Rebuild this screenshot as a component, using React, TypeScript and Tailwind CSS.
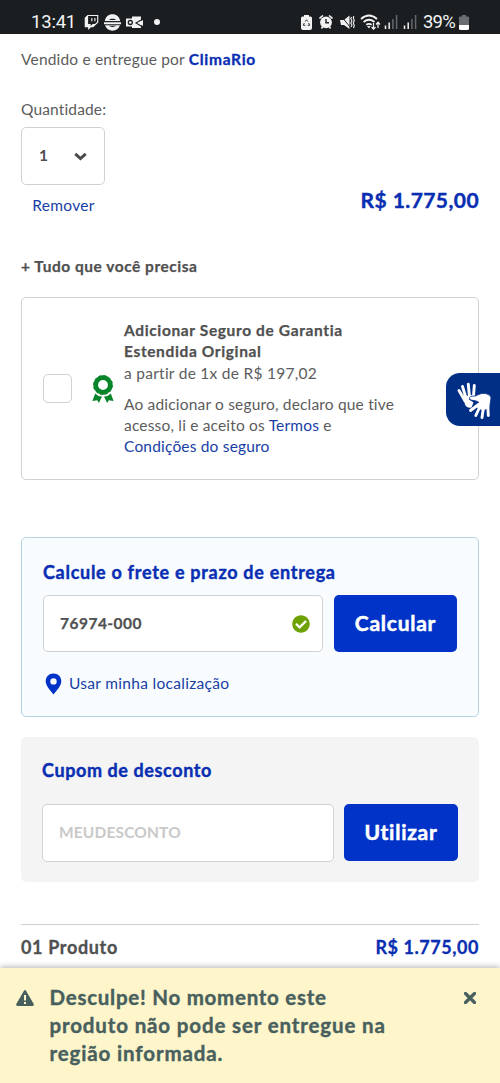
import type { ReactNode } from "react";
import { FaCheckCircle, FaTwitch } from "react-icons/fa";

const Signal = () => (
  <svg className="h-[14px] w-[14px]" viewBox="0 0 14 14">
    <path d="M1.5 10.5V14M5.2 7.5V14" stroke="#f2f2f2" strokeWidth="1.5" />
    <path d="M8.9 4V14M12.6 0V14" stroke="#65696c" strokeWidth="1.5" />
  </svg>
);

const StatusBar = () => (
  <header className="relative h-[34px] shrink-0 bg-[#1a1e21] text-[#f2f2f2]">
    <div className="flex h-full items-center pt-[10px] pl-[31px] font-[Roboto,sans-serif] text-[18.5px] leading-none">
      <span className="w-[53px] tracking-[-0.2px]">13:41</span>
      <FaTwitch className="size-[15px]" />
      <svg className="ml-[5px] size-[17px]" viewBox="0 0 17 17">
        <path
          d="M.8 7C1.500 2.800 4.500 .2 8.500 .2S15.500 2.800 16.200 7ZM0 8.200h17v2H0ZM1 11.200h15c-1.200 3.400-3.800 5.500-7.500 5.500S2.200 14.600 1 11.200Z"
          fill="currentColor"
        />
        <path d="M5 6C6 4.200 11 4.200 12 6ZM5 11.800H12C11 13.300 6 13.300 5 11.800Z" fill="#1a1e21" />
      </svg>
      <svg className="ml-[5px] h-[13px] w-[17px]" viewBox="0 0 17 13">
        <path d="M6 .5H15V12H6Z" fill="#f2f2f2" />
        <path d="M0 2.500H8.500V10.500H0Z" fill="#f2f2f2" />
        <circle cx="4.300" cy="6.500" r="2" fill="none" stroke="#1a1e21" strokeWidth="1.300" />
        <path d="M16 3.500L10 7L16 10.500" fill="none" stroke="#1a1e21" strokeWidth="1.100" />
        <path d="M17 4L12 7L17 10Z" fill="#f2f2f2" />
      </svg>
      <span className="ml-[11px] size-[6px] rounded-full bg-[#f2f2f2]" />
      <div className="ml-auto flex items-center pr-[31px]">
        <svg className="h-[15px] w-[11px]" viewBox="0 0 11 15">
          <path d="M3 0H8V1.500H9.500Q11 1.500 11 3V13Q11 15 9 15H2Q0 15 0 13V3Q0 1.500 1.500 1.500H3Z" fill="currentColor" />
          <path d="M4.200 6.500L5.500 4.800L6.800 6.500M7.600 8L8.700 10.300H6.700M4.300 10.300H2.300L3.300 8" fill="none" stroke="#1a1e21" strokeWidth=".9" />
        </svg>
        <svg className="ml-[7px] size-[14px]" viewBox="0 0 14 14">
          <path d="M.5 3.500L4 .5M13.500 3.500L10 .5M2.500 13.500L4 11M11.500 13.500L10 11" stroke="currentColor" strokeWidth="1.600" />
          <circle cx="7" cy="7.300" r="5.900" fill="currentColor" />
          <path d="M7 4V7.800H10" fill="none" stroke="#1a1e21" strokeWidth="1.400" />
        </svg>
        <svg className="ml-[7px] size-[15px]" viewBox="0 0 15 15">
          <path d="M0 5H4L9.500 .5V14L4 10H1Z" fill="currentColor" />
          <path d="M1 1L11 13" stroke="#1a1e21" strokeWidth="1" />
          <path d="M11.500 2L10.800 4L12 6L10.800 8L12 10L11 12M13.800 1L13.300 3L14.300 5.500L13.300 8L14.300 10.500L13.500 13" fill="none" stroke="currentColor" strokeWidth="1.100" />
        </svg>
        <svg className="ml-[5px] h-[16px] w-[21px]" viewBox="0 0 21 16">
          <path d="M1 5Q9-2 17 5M3.600 8Q9 3.500 14.500 8M6.300 10.800Q9 8.800 11.700 10.800" fill="none" stroke="currentColor" strokeWidth="1.700" />
          <path d="M7 12L9 14.500L10.500 12Z" fill="currentColor" />
          <path d="M13.500 9V15M11.500 13L13.500 15.200L15.500 13M18 14V8.500M16 10.500L18 8.200L20 10.500" fill="none" stroke="currentColor" strokeWidth="1.200" />
        </svg>
        <span className="ml-[3px]">
          <Signal />
        </span>
        <span className="ml-[5px]">
          <Signal />
        </span>
        <span className="ml-[6px] w-[34px] tracking-[-0.8px] whitespace-nowrap">39%</span>
        <svg className="ml-[2px] h-[15px] w-[10px]" viewBox="0 0 10 15">
          <path d="M3 0H7V1.500H9Q10 1.500 10 2.500V10H0V2.500Q0 1.500 1 1.500H3Z" fill="#6b6e70" />
          <path d="M0 10H10V13.500Q10 15 8.500 15H1.500Q0 15 0 13.500Z" fill="#fff" />
        </svg>
      </div>
    </div>
  </header>
);

const WarrantyBadge = () => (
  <svg className="h-[28px] w-[22px]" viewBox="0 0 22 28">
    <circle cx="11" cy="10" r="7.300" fill="none" stroke="#078429" strokeWidth="4.700" />
    <circle cx="11" cy="10" r="9.500" fill="none" stroke="#078429" strokeWidth="1" strokeDasharray="3 1.970" />
    <path d="M3.200 18.500Q6.200 21.800 10 21.500L6.900 28L5.200 25.300L.4 26ZM18.800 18.500Q15.800 21.800 12 21.500L15.100 28L16.800 25.300L21.600 26Z" fill="#078429" />
  </svg>
);

const LibrasButton = () => (
  <button
    type="button"
    className="absolute top-[373px] right-0 h-[53px] w-[54px] rounded-l-[14px] bg-[#012f86]"
  >
    <svg className="absolute top-[9px] left-[11px] h-[38px] w-[36px]" viewBox="0 0 36 38">
      <path d="M6.500 16L11 13.500L18.500 12.500L13 15.500L12 17.500L16.500 20.500L14.500 25.500Q10 26.500 8 22.500Z" fill="#fff" />
      <path
        d="M8 19L2 8.500M9 16L5.500 4.500M12.500 15L11.300 2.300M16.500 14L17.300 3.500"
        fill="none"
        stroke="#fff"
        strokeWidth="2.900"
        strokeLinecap="round"
      />
      <path
        d="M15 14.200Q19 14.500 21 12.800Q25 10.500 29 11.600Q34 13 34 16L32.500 26L26 29L19.500 26L21.500 20L18.500 18.800L13.500 18Q11 14.500 15 14.200Z"
        fill="#fff"
        stroke="#012f86"
        strokeWidth=".8"
      />
      <path
        d="M21.500 22.500L13.500 28.500M23 24.500L18.800 33.500M26.500 25L25 35.500M30.800 23L31.300 33.500"
        fill="none"
        stroke="#fff"
        strokeWidth="2.900"
        strokeLinecap="round"
      />
    </svg>
  </button>
);

interface ActionButtonProps {
  children: ReactNode;
  className: string;
}

const ActionButton = ({ children, className }: ActionButtonProps) => (
  <button
    type="button"
    className={`h-[57px] shrink-0 rounded-[5px] bg-[#0133c8] pb-[2px] text-[21px] font-bold tracking-[0.73px] text-white [-webkit-text-stroke:0.5px] ${className}`}
  >
    {children}
  </button>
);

const Insurance = () => (
  <section className="mt-[20px] flex h-[183px] rounded-[5px] border border-[#d1d1d1] pt-[21px] pl-[21px]">
    <span className="mt-[55px] size-[29px] shrink-0 rounded-[5px] border border-[#d1d1d1]" />
    <div className="mt-[56px] ml-[20px] shrink-0">
      <WarrantyBadge />
    </div>
    <div className="mt-px ml-[10px] leading-[21.300px] whitespace-nowrap">
      <p className="font-bold tracking-[0.630px] text-[#505050] [-webkit-text-stroke:0.25px]">
        Adicionar Seguro de Garantia
        <br />
        Estendida Original
      </p>
      <p className="tracking-[0.270px]">a partir de 1x de R$ 197,02</p>
      <p className="mt-[10px] tracking-[0.180px]">
        Ao adicionar o seguro, declaro que tive
        <br />
        acesso, li e aceito os <a className="text-[#173ea5]">Termos</a> e
        <br />
        <a className="text-[#173ea5]">Condições do seguro</a>
      </p>
    </div>
  </section>
);

const Shipping = () => (
  <section className="mt-[57px] h-[180px] rounded-[5px] border border-[#b5d5e3] bg-[#f8fcff] px-[21px] pt-[22px]">
    <h2 className="h-[25px] text-[18px] leading-[25px] font-bold tracking-[0.710px] text-[#092eb2] [-webkit-text-stroke:0.4px]">
      Calcule o frete e prazo de entrega
    </h2>
    <div className="mt-[10px] flex gap-[11px]">
      <div className="flex h-[57px] w-[280px] items-center justify-between rounded-[5px] border border-[#d1d1d1] bg-white pr-[12px] pl-[16px]">
        <span className="font-bold tracking-[0.480px] text-[#505050] [-webkit-text-stroke:0.25px]">76974-000</span>
        <FaCheckCircle className="size-[18px] text-[#6ea204]" />
      </div>
      <ActionButton className="w-[123px]">Calcular</ActionButton>
    </div>
    <div className="mt-[20px] flex h-[23px] items-center">
      <svg className="ml-[2px] h-[22px] w-[17px]" viewBox="0 0 17 22">
        <path
          d="M8.500 .5C4 .5 .7 3.900 .7 8.200C.7 13 5.500 17.500 8.500 21.500C11.500 17.500 16.300 13 16.300 8.200C16.300 3.900 13 .5 8.500 .5ZM8.500 5.200A3.200 3.200 0 1 1 8.500 11.600A3.200 3.200 0 0 1 8.500 5.200Z"
          fill="#0133c8"
        />
      </svg>
      <a className="ml-[7px] tracking-[0.300px] text-[#173ea5]">Usar minha localização</a>
    </div>
  </section>
);

const Coupon = () => (
  <section className="mt-[20px] h-[145px] rounded-[5px] bg-[#f4f4f4] px-[21px] pt-[21px]">
    <h2 className="h-[24px] text-[18px] leading-[24px] font-bold tracking-[0.600px] text-[#092eb2] [-webkit-text-stroke:0.4px]">
      Cupom de desconto
    </h2>
    <div className="mt-[22px] flex gap-[10px]">
      <div className="flex h-[58px] w-[292px] items-center rounded-[5px] border border-[#d1d1d1] bg-white pl-[16px] font-bold tracking-[0.150px] text-[#c9c9c9]">
        MEUDESCONTO
      </div>
      <ActionButton className="w-[114px]">Utilizar</ActionButton>
    </div>
  </section>
);

const Alert = () => (
  <aside className="absolute inset-x-0 bottom-0 flex h-[115px] bg-[#fef5ca] text-[#48605d] shadow-[0_-1px_6px_rgba(0,0,0,0.3)]">
    <svg className="mt-[21px] ml-[16px] h-[18px] w-[18px] shrink-0" viewBox="0 0 18 18">
      <path d="M9 1Q9.700 1 10.200 1.900L17.700 15Q18.300 16.800 16.500 17H1.500Q-.3 16.800 .3 15L7.800 1.900Q8.300 1 9 1Z" fill="currentColor" />
      <path d="M9 6V11.500M9 13V15" stroke="#fef5ca" strokeWidth="2" />
    </svg>
    <p className="mt-[14.500px] ml-[15.500px] text-[20.500px] leading-[28.200px] font-bold tracking-[0.860px] whitespace-nowrap [-webkit-text-stroke:0.4px]">
      <span className="tracking-[0.740px]">Desculpe! No momento este</span>
      <br />
      produto não pode ser entregue na
      <br />
      região informada.
    </p>
    <svg className="absolute top-[24px] right-[24px] size-[12px]" viewBox="0 0 12 12">
      <path d="M1.500 1.500L10.500 10.500M10.500 1.500L1.500 10.500" stroke="currentColor" strokeWidth="3.200" strokeLinecap="round" />
    </svg>
  </aside>
);

export default function App() {
  return (
    <div className="relative flex h-[1083px] w-[500px] flex-col overflow-hidden bg-white font-[Lato,sans-serif] text-[15.500px] text-[#5c5c5c]">
      <StatusBar />
      <main className="px-[21px] pt-[14px]">
        <p className="h-[22px] leading-[22px] tracking-[0.180px]">
          Vendido e entregue por{" "}
          <b className="tracking-[0.730px] text-[#092eb2] [-webkit-text-stroke:0.3px]">ClimaRio</b>
        </p>
        <p className="mt-[28px] h-[22px] leading-[22px] tracking-[0.150px]">Quantidade:</p>
        <div className="mt-[7px] flex items-start justify-between">
          <div className="w-[84px]">
            <div className="flex h-[58px] items-center rounded-[5px] border border-[#d1d1d1] pl-[17px] font-bold text-[#505050]">
              1
              <svg className="ml-[26px] h-[9px] w-[13px]" viewBox="0 0 13 9">
                <path d="M1.300 1.800L6.500 6.500L11.700 1.800" fill="none" stroke="#4a4a4a" strokeWidth="3" />
              </svg>
            </div>
            <a className="mt-[9px] block h-[22px] pl-px text-center leading-[22px] tracking-[0.280px] text-[#173ea5]">
              Remover
            </a>
          </div>
          <strong className="mt-[58px] text-[21px] leading-[30px] tracking-[0.420px] text-[#092eb2] [-webkit-text-stroke:0.4px]">
            R$ 1.775,00
          </strong>
        </div>
        <h3 className="mt-[39px] h-[22px] leading-[22px] font-bold tracking-[0.520px] text-[#505050] [-webkit-text-stroke:0.25px]">
          + Tudo que você precisa
        </h3>
        <Insurance />
        <Shipping />
        <Coupon />
        <div className="mt-[42px] flex h-[46px] items-center justify-between border-t border-[#d1d1d1] text-[18px] font-bold [-webkit-text-stroke:0.3px]">
          <span className="tracking-[0.650px] text-[#505050]">01 Produto</span>
          <span className="tracking-[0.550px] text-[#092eb2]">R$ 1.775,00</span>
        </div>
      </main>
      <LibrasButton />
      <Alert />
    </div>
  );
}
